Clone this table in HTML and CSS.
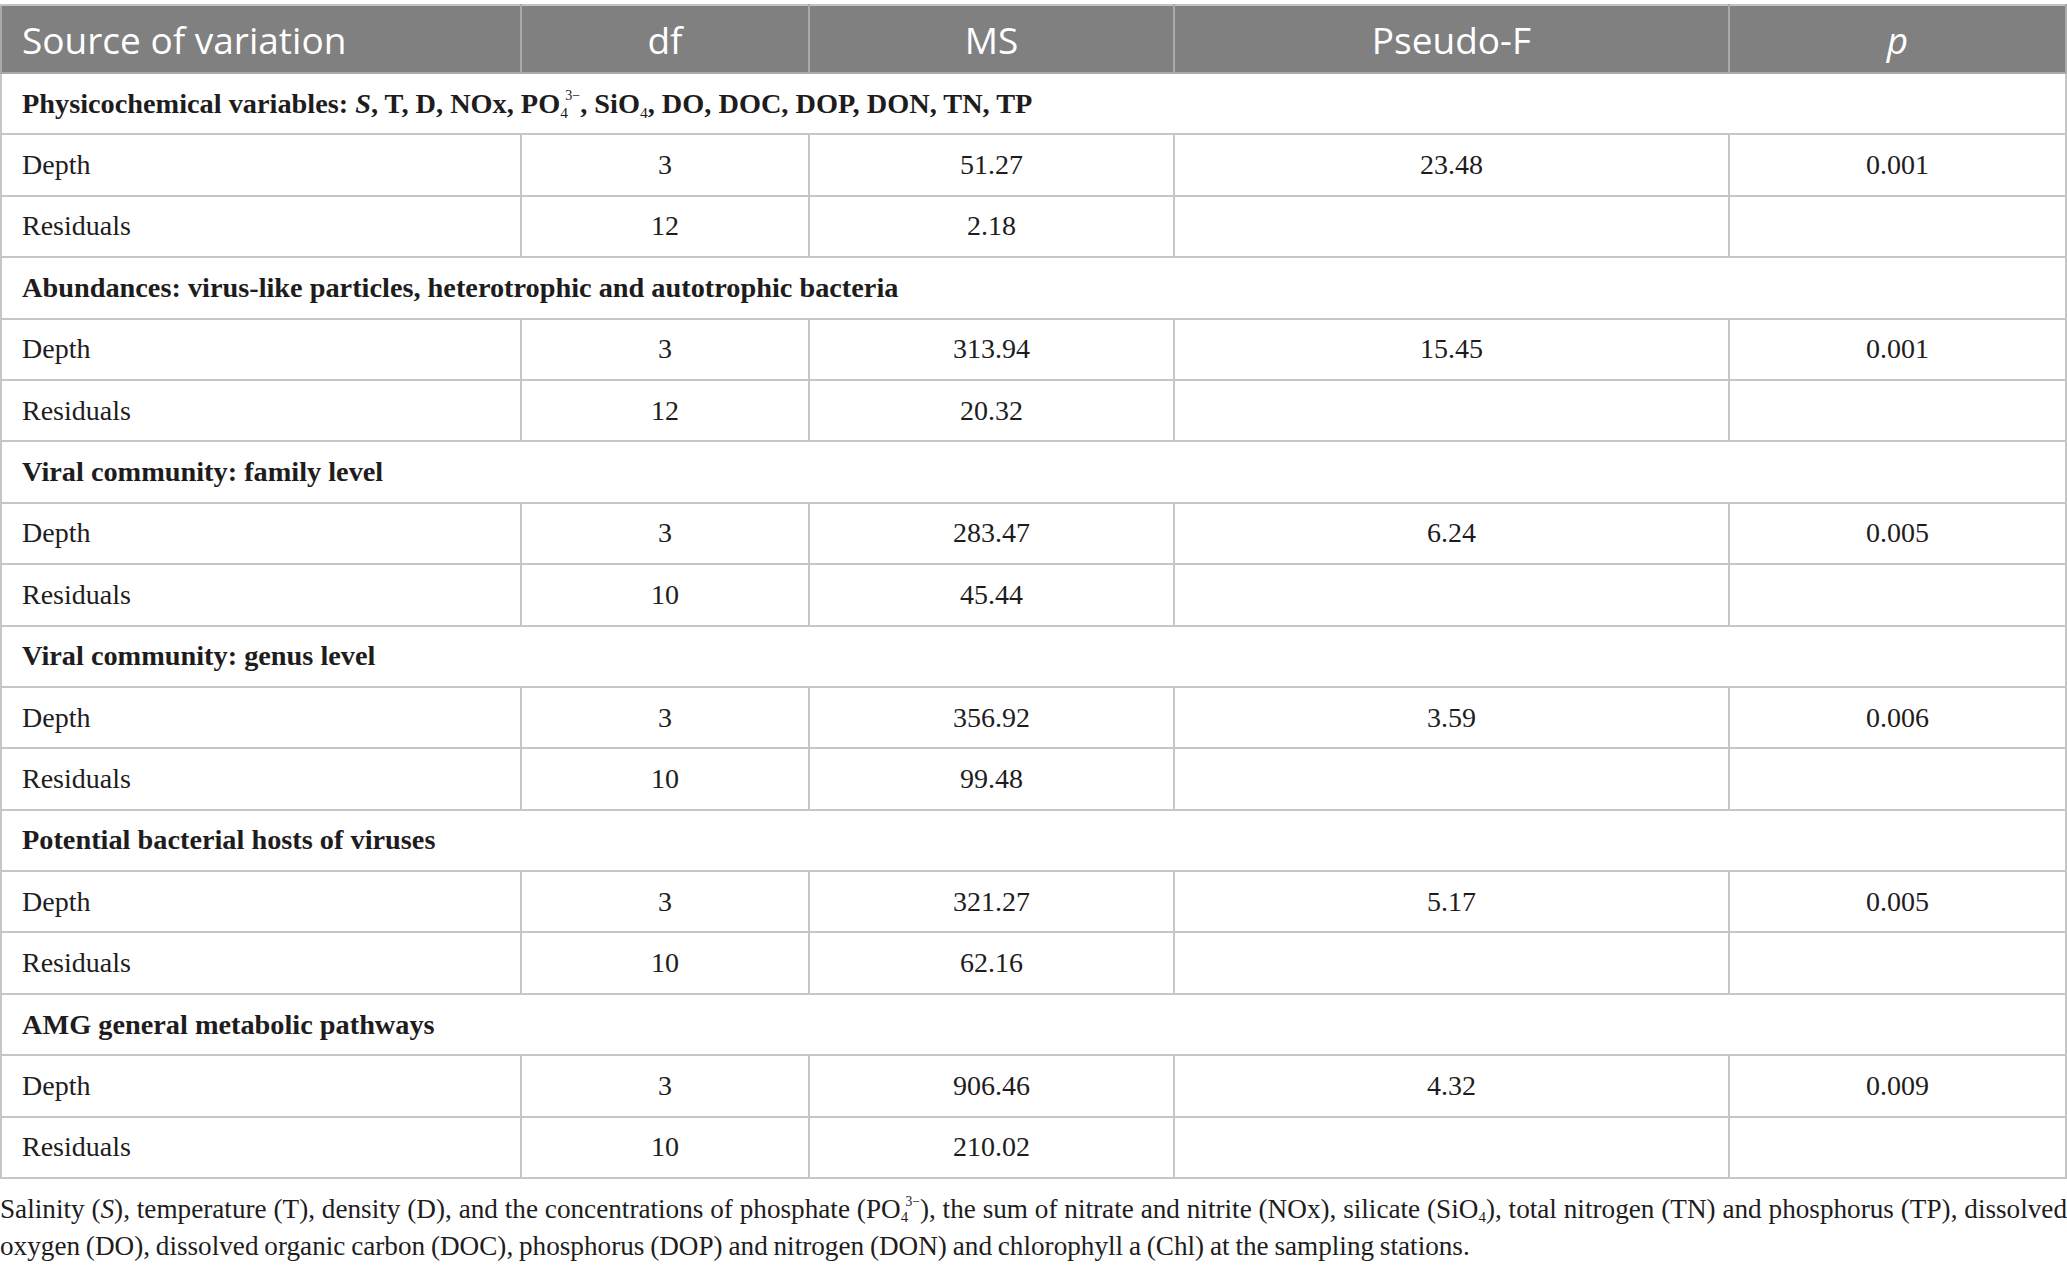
FILE: index.html
```html
<!DOCTYPE html>
<html lang="en">
<head>
    <meta charset="UTF-8">
    <title>PERMANOVA - depth effect</title>
    <link rel="stylesheet" href="styles.css">
</head>
<body>
    <div class="page">
        <table class="stats">
            <thead>
                <tr>
                    <th class="col-source">Source of variation</th>
                    <th class="col-df">df</th>
                    <th class="col-ms">MS</th>
                    <th class="col-f">Pseudo-F</th>
                    <th class="col-p"><i>p</i></th>
                </tr>
            </thead>
            <tbody>
                <tr class="section">
                    <td colspan="5">Physicochemical variables: <i>S</i>, T, D, NOx, PO<sub>4</sub><sup class="charge">3&minus;</sup>, SiO<sub>4</sub>, DO, DOC, DOP, DON, TN, TP</td>
                </tr>
                <tr><td>Depth</td><td>3</td><td>51.27</td><td>23.48</td><td>0.001</td></tr>
                <tr><td>Residuals</td><td>12</td><td>2.18</td><td></td><td></td></tr>

                <tr class="section">
                    <td colspan="5">Abundances: virus-like particles, heterotrophic and autotrophic bacteria</td>
                </tr>
                <tr><td>Depth</td><td>3</td><td>313.94</td><td>15.45</td><td>0.001</td></tr>
                <tr><td>Residuals</td><td>12</td><td>20.32</td><td></td><td></td></tr>

                <tr class="section">
                    <td colspan="5">Viral community: family level</td>
                </tr>
                <tr><td>Depth</td><td>3</td><td>283.47</td><td>6.24</td><td>0.005</td></tr>
                <tr><td>Residuals</td><td>10</td><td>45.44</td><td></td><td></td></tr>

                <tr class="section">
                    <td colspan="5">Viral community: genus level</td>
                </tr>
                <tr><td>Depth</td><td>3</td><td>356.92</td><td>3.59</td><td>0.006</td></tr>
                <tr><td>Residuals</td><td>10</td><td>99.48</td><td></td><td></td></tr>

                <tr class="section">
                    <td colspan="5">Potential bacterial hosts of viruses</td>
                </tr>
                <tr><td>Depth</td><td>3</td><td>321.27</td><td>5.17</td><td>0.005</td></tr>
                <tr><td>Residuals</td><td>10</td><td>62.16</td><td></td><td></td></tr>

                <tr class="section">
                    <td colspan="5">AMG general metabolic pathways</td>
                </tr>
                <tr><td>Depth</td><td>3</td><td>906.46</td><td>4.32</td><td>0.009</td></tr>
                <tr><td>Residuals</td><td>10</td><td>210.02</td><td></td><td></td></tr>
            </tbody>
        </table>

        <p class="footnote">Salinity (<i>S</i>), temperature (T), density (D), and the concentrations of phosphate (PO<sub>4</sub><sup class="charge">3&minus;</sup>), the sum of nitrate and nitrite (NOx), silicate (SiO<sub>4</sub>), total nitrogen (TN) and phosphorus (TP), dissolved oxygen (DO), dissolved organic carbon (DOC), phosphorus (DOP) and nitrogen (DON) and chlorophyll a (Chl) at the sampling stations.</p>
    </div>
</body>
</html>
```

FILE: styles.css
```css
body {
    margin: 0;
    background-color: #ffffff;
    color: #1e1c1d;
    font-family: 'Liberation Serif', 'Times New Roman', serif;
}
.page {
    padding-top: 4px;
}
.stats {
    width: 2067px;
    border-collapse: collapse;
    table-layout: fixed;
}
.stats th {
    background-color: #7f807f;
    color: #ffffff;
    font-family: 'Open Sans', 'Noto Sans', sans-serif;
    font-weight: normal;
    font-size: 37px;
    height: 66px;
    padding: 0 20px;
    border: 2px solid #a9aaa9;
    border-top-color: #c4c4c4;
    text-align: center;
}
.stats th.col-source {
    text-align: left;
}
/* widths are content widths: cell padding is 40px */
.col-source { width: 478px; }
.col-df { width: 246px; }
.col-ms { width: 323px; }
.col-f { width: 513px; }
.stats tbody tr {
    height: 61.4px;
}
.stats td {
    font-size: 28px;
    padding: 0 20px;
    border: 2px solid #c6c6c6;
    text-align: center;
    vertical-align: middle;
}
.stats td:first-child {
    text-align: left;
}
.stats tr.section td {
    font-weight: bold;
    font-size: 28.3px;
    text-align: left;
}
sub {
    font-size: 0.55em;
    font-weight: normal;
    line-height: 0;
    vertical-align: -0.3em;
}
sup.charge {
    font-size: 0.5em;
    font-weight: normal;
    line-height: 0;
    vertical-align: 0.9em;
    margin-left: -0.2em;
}
.footnote {
    margin: 12px 0 0 0;
    font-size: 27.2px;
    line-height: 37px;
    word-spacing: -1px;
    text-align: justify;
}
```
